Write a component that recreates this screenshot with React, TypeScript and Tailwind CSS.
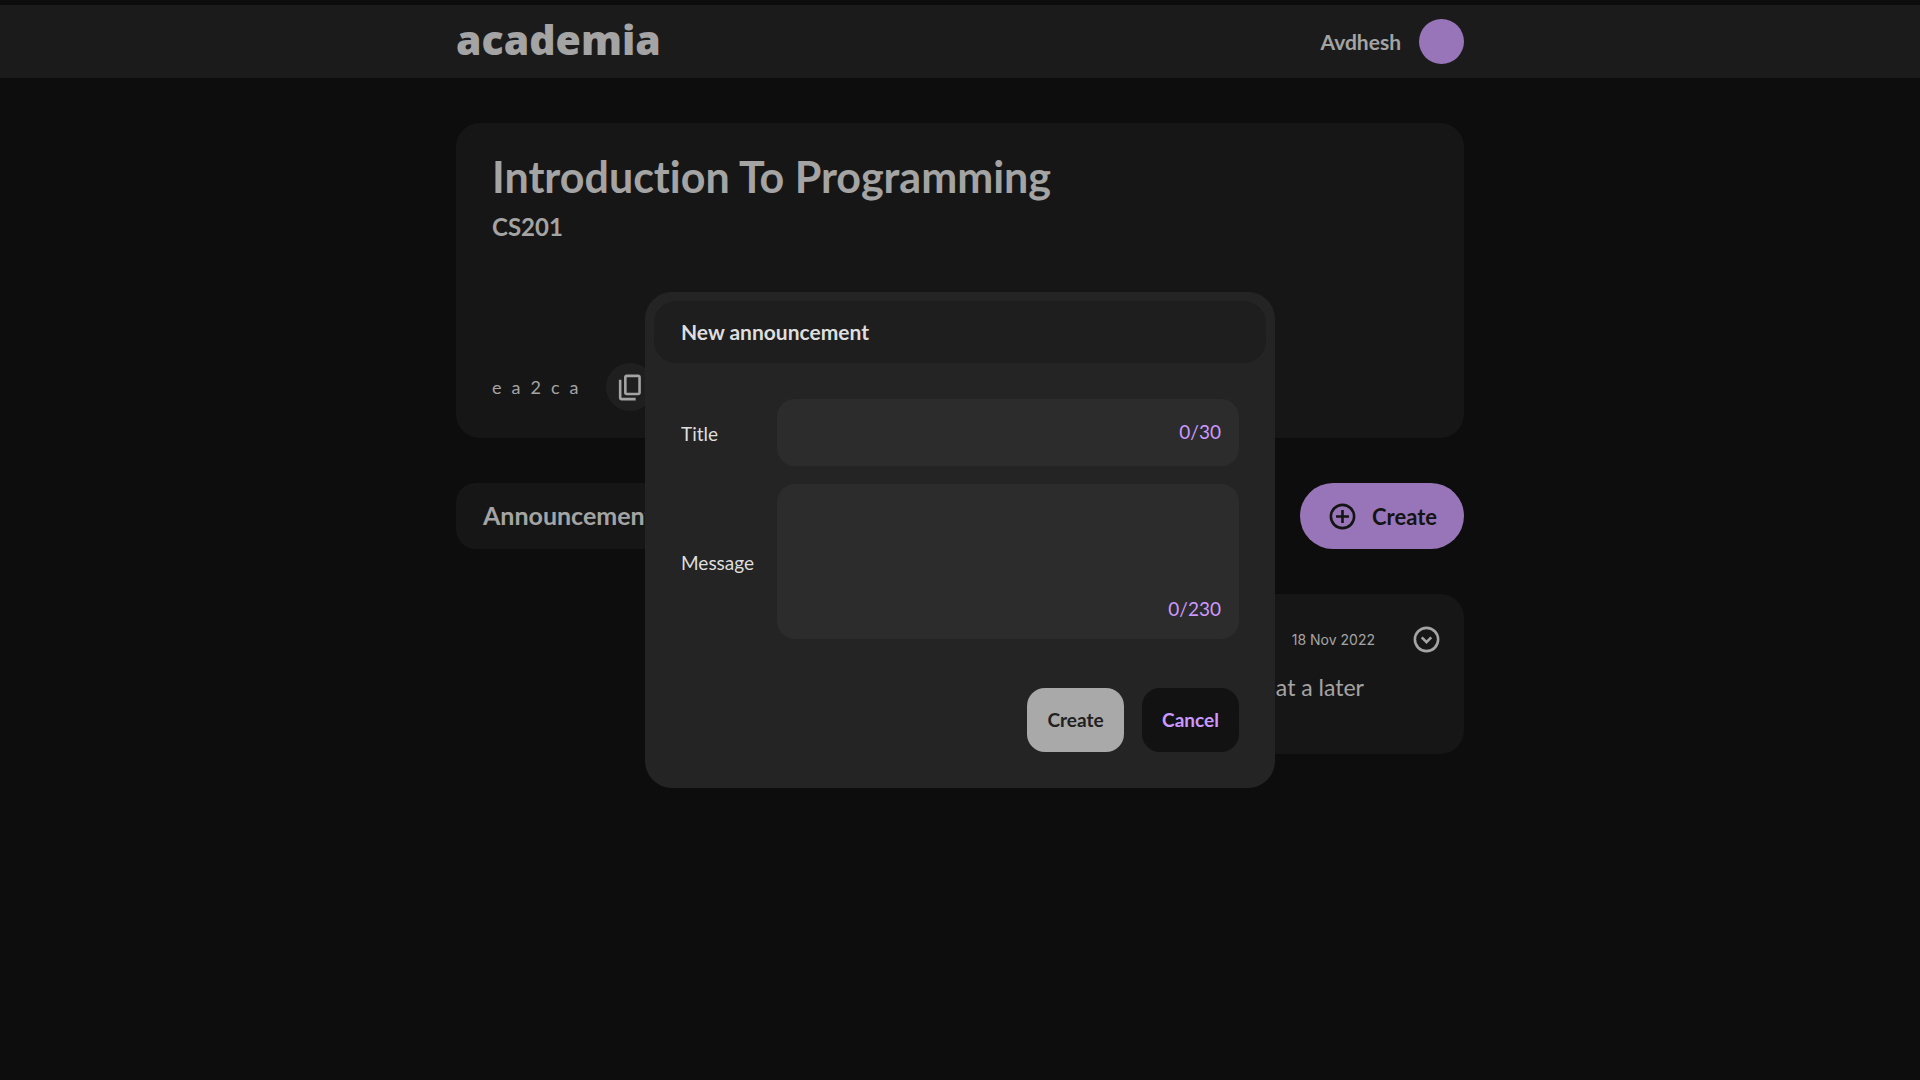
import type { ReactNode } from "react";

function Icon({ children }: { children: ReactNode }) {
  return (
    <svg viewBox="0 0 24 24" className="size-[31px] shrink-0" fill="currentColor" fillRule="evenodd" aria-hidden="true">
      {children}
    </svg>
  );
}

const RING =
  "M12 22a10 10 0 1 1 0-20 10 10 0 0 1 0 20Zm0-2a8 8 0 1 0 0-16 8 8 0 0 0 0 16Z";

function CopyIcon() {
  return (
    <Icon>
      <path d="M9 18q-.825 0-1.413-.587Q7 16.825 7 16V4q0-.825.587-1.413Q8.175 2 9 2h9q.825 0 1.413.587Q20 3.175 20 4v12q0 .825-.587 1.413Q18.825 18 18 18Zm0-2h9V4H9v12Z" />
      <path d="M5 22q-.825 0-1.413-.587Q3 20.825 3 20V6h2v14h11v2Z" />
    </Icon>
  );
}

function AddCircleIcon() {
  return (
    <Icon>
      <path d={RING} />
      <path d="M11 17h2v-4h4v-2h-4V7h-2v4H7v2h4Z" />
    </Icon>
  );
}

function ExpandCircleIcon() {
  return (
    <Icon>
      <path d={RING} />
      <path d="M12 15.4l4.4-4.4-1.4-1.4-3 3-3-3-1.4 1.4Z" />
    </Icon>
  );
}

function Header() {
  return (
    <header className="bg-[#252525]">
      <div className="mx-auto flex h-[73px] max-w-[1008px] items-center justify-between">
        <a href="#" className="pb-1 font-['Open_Sans',sans-serif] text-[41px] leading-none font-extrabold">
          academia
        </a>
        <button type="button" className="flex items-center gap-[18px] text-[21px] font-bold">
          Avdhesh
          <span className="size-[45px] rounded-full bg-[#cb9df7]" />
        </button>
      </div>
    </header>
  );
}

function CourseCard() {
  return (
    <section className="flex min-h-[315px] flex-col justify-between rounded-3xl bg-[#1e1e1e] px-9 py-[27px]">
      <div>
        <h1 className="text-[43px] leading-[54px] font-bold">Introduction To Programming</h1>
        <p className="mt-[5px] text-2xl leading-9 font-bold">CS201</p>
      </div>
      <div className="flex items-center gap-[18px]">
        <span className="text-lg tracking-[10px]">ea2ca</span>
        <button type="button" aria-label="Copy code" className="grid size-12 place-items-center rounded-full bg-[#2a2a2a]">
          <CopyIcon />
        </button>
      </div>
    </section>
  );
}

function Toolbar() {
  return (
    <div className="flex items-center justify-between">
      <nav className="rounded-[20px] bg-[#1e1e1e]">
        <button type="button" className="h-[66px] px-[27px] text-[25px] font-bold">
          Announcements
        </button>
      </nav>
      <button
        type="button"
        className="flex h-[66px] items-center gap-[14px] rounded-full bg-[#cb9df7] px-[27px] text-[22px] font-bold text-[#1b1b1b]"
      >
        <AddCircleIcon />
        Create
      </button>
    </div>
  );
}

function Post() {
  return (
    <article className="ml-auto min-h-[160px] w-3/4 rounded-3xl bg-[#1e1e1e] py-[30px] pr-[22px]">
      <div className="flex items-center justify-end gap-9">
        <time dateTime="2022-11-18" className="font-[Inter,sans-serif] text-sm">
          18 Nov 2022
        </time>
        <button type="button" aria-label="Expand">
          <ExpandCircleIcon />
        </button>
      </div>
      <p className="mt-4 pr-[78px] text-right text-[23px] leading-8">at a later</p>
    </article>
  );
}

function NewAnnouncementDialog() {
  return (
    <div className="fixed inset-0 grid place-items-center bg-black/25">
      <form
        role="dialog"
        aria-labelledby="dialog-title"
        className="w-full max-w-[630px] rounded-[27px] bg-[#242424] p-[9px] text-[19px] text-[#dedede]"
      >
        <h2 id="dialog-title" className="rounded-[22px] bg-[#1e1e1e] px-[27px] py-4 text-[21px] leading-[30px] font-bold">
          New announcement
        </h2>
        <div className="px-[27px] pt-9 pb-[27px]">
          <div className="grid grid-cols-[96px_1fr] items-center gap-y-[18px]">
            <label htmlFor="title" className="pt-1">
              Title
            </label>
            <div className="flex h-[67px] items-center rounded-[18px] bg-[#2c2c2c] px-[18px]">
              <input id="title" type="text" maxLength={30} className="min-w-0 flex-1 bg-transparent outline-none" />
              <span className="text-[#cb99ff]">0/30</span>
            </div>
            <label htmlFor="message" className="pt-1">
              Message
            </label>
            <div className="flex h-[155px] items-end rounded-[18px] bg-[#2c2c2c] px-[18px] py-4">
              <textarea
                id="message"
                maxLength={230}
                className="h-full min-w-0 flex-1 resize-none bg-transparent outline-none"
              />
              <span className="text-[#cb99ff]">0/230</span>
            </div>
          </div>
          <div className="mt-[49px] flex justify-end gap-[18px] font-bold">
            <button type="submit" disabled className="h-16 w-[97px] rounded-[18px] bg-[#a9a9a9] text-[#212121]">
              Create
            </button>
            <button type="button" className="h-16 w-[97px] rounded-[18px] bg-[#121212] text-[#cb99ff]">
              Cancel
            </button>
          </div>
        </div>
      </form>
    </div>
  );
}

export default function App() {
  return (
    <div className="min-h-screen bg-[#121212] pt-[5px] font-[Lato,sans-serif] text-[#dbdbdb] [font-variant-ligatures:none]">
      <Header />
      <main className="mx-auto mt-[45px] flex max-w-[1008px] flex-col gap-[45px]">
        <CourseCard />
        <Toolbar />
        <Post />
      </main>
      <NewAnnouncementDialog />
    </div>
  );
}
